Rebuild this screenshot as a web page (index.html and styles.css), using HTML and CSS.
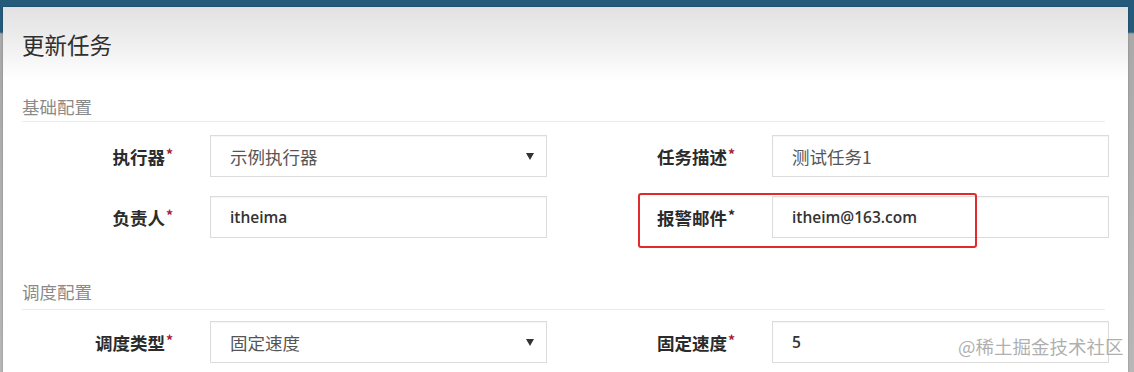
FILE: index.html
```html
<!DOCTYPE html>
<html lang="zh-CN">
<head>
<meta charset="utf-8">
<title>更新任务</title>
<link rel="stylesheet" href="styles.css">
</head>
<body>
<div class="modal">
  <div class="modal-header">
    <h4 class="modal-title">更新任务</h4>
  </div>
  <div class="modal-body">
    <div class="section-title">基础配置</div>
    <div class="form-grid first">
      <label class="form-label">执行器<span class="req">*</span></label>
      <div class="field select"><span class="val">示例执行器</span><span class="caret"></span></div>
      <label class="form-label">任务描述<span class="req">*</span></label>
      <div class="field"><span class="val">测试任务1</span></div>
      <label class="form-label">负责人<span class="req">*</span></label>
      <div class="field"><span class="val latin">itheima</span></div>
      <label class="form-label">报警邮件<span class="req dark">*</span></label>
      <div class="field"><span class="val latin">itheim@163.com</span></div>
    </div>
    <div class="section-title second">调度配置</div>
    <div class="form-grid second">
      <label class="form-label">调度类型<span class="req">*</span></label>
      <div class="field select"><span class="val">固定速度</span><span class="caret"></span></div>
      <label class="form-label">固定速度<span class="req">*</span></label>
      <div class="field"><span class="val latin">5</span></div>
    </div>
  </div>
</div>
<div class="highlight"></div>
<div class="watermark">@稀土掘金技术社区</div>
</body>
</html>
```
FILE: styles.css
```css
html, body {
  margin: 0;
  padding: 0;
  height: 372px;
  overflow: hidden;
}
body {
  position: relative;
  background: linear-gradient(to bottom, #245b7b 0, #245b7b 32px, #a9a9a9 34px, #b7b7b7 100%);
  font-family: "Noto Sans CJK SC", "Noto Sans", sans-serif;
  color: #333;
}
.modal {
  margin: 7px 6px 0 3px;
  height: 365px;
  background: #fff;
  box-shadow: 0 0 2px rgba(0,0,0,0.25);
}
.modal-header {
  height: 73px;
  padding: 0 19px;
  display: flex;
  align-items: center;
  background: linear-gradient(to bottom, #e2e2e2 0%, #efefef 50%, #ffffff 100%);
  border-top: 1px solid #d6e4e4;
  box-sizing: border-box;
}
.modal-title {
  margin: 0;
  font-size: 22.5px;
  font-weight: 400;
  line-height: 26px;
  color: #2f2f2f;
}
.modal-body {
  padding: 0 23px 0 19px;
}
.section-title {
  margin-top: 16px;
  font-size: 17.5px;
  line-height: 22px;
  padding-bottom: 3px;
  color: #8a8a8a;
  border-bottom: 1px solid #ececec;
}
.section-title.second {
  margin-top: 43px;
  padding-bottom: 6px;
}
.form-grid {
  display: grid;
  grid-template-columns: 151px 337px 151px 337px;
  column-gap: 37px;
  row-gap: 19px;
  margin-top: 13px;
}
.form-grid.second {
  margin-top: 11px;
}
.form-label {
  display: flex;
  align-items: center;
  justify-content: flex-end;
  font-size: 17.5px;
  font-weight: 700;
  color: #2b2b2b;
  height: 42px;
}
.req {
  color: #a8203a;
  font-size: 14px;
  align-self: flex-start;
  margin-top: 9px;
  margin-left: 1px;
}
.req.dark {
  color: #2b2b2b;
}
.field {
  height: 42px;
  box-sizing: border-box;
  border: 1px solid #dcdcdc;
  background: #fff;
  box-shadow: inset 0 1px 1px rgba(0,0,0,0.04);
  display: flex;
  align-items: center;
  padding: 0 12px 0 19px;
}
.val {
  font-size: 17.5px;
  color: #555;
  flex: 1;
}
.val.latin {
  font-family: "Open Sans", "Noto Sans", sans-serif;
  font-weight: 600;
  font-size: 15.5px;
  color: #333;
}
.caret {
  width: 0;
  height: 0;
  border-left: 4px solid transparent;
  border-right: 4px solid transparent;
  border-top: 7px solid #333;
}
.highlight {
  position: absolute;
  left: 638px;
  top: 193px;
  width: 339px;
  height: 55px;
  box-sizing: border-box;
  border: 2px solid #e12a2a;
  border-radius: 3px;
}
.watermark {
  position: absolute;
  left: 958px;
  top: 334px;
  font-size: 18.5px;
  line-height: 24px;
  color: rgba(140,140,140,0.7);
}
```
